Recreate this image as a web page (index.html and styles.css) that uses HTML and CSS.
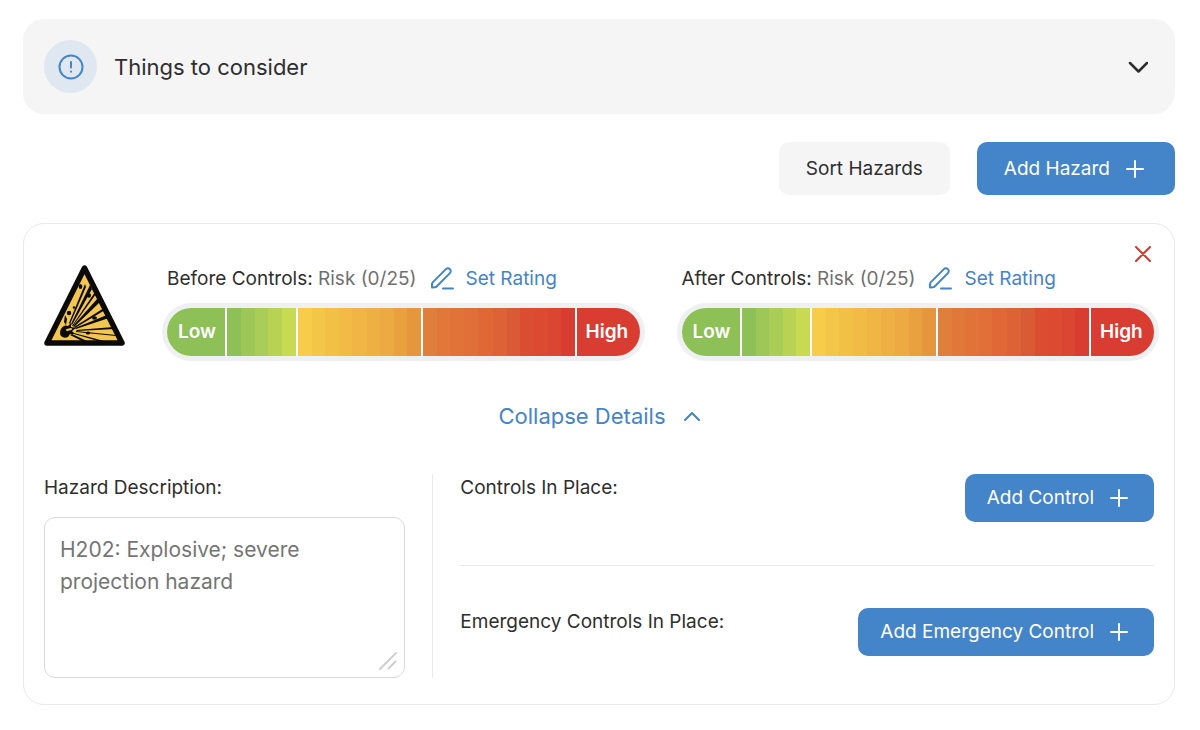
FILE: index.html
```
<!DOCTYPE html>
<html lang="en">
<head>
 <meta charset="utf-8">
 <meta name="viewport" content="width=device-width, initial-scale=1.0">
 <title>Hazards</title>
 <link rel="stylesheet" href="styles.css">
</head>
<body>
<button type="button" class="Consider">
 <span class="ConsiderIcon">
  <svg width="26" height="26" viewBox="0 0 26 26"><circle cx="13" cy="13" r="11.500"/><path d="M13 8v5.500M13 17.400v.3"/></svg>
 </span>
 <span class="ConsiderTitle">Things to consider</span>
 <svg class="ConsiderArrow" width="20" height="12" viewBox="0 0 20 12"><path d="M2 2L10.500 10.500L19 2"/></svg>
</button>

<div class="Toolbar">
 <button type="button" class="Button ButtonLarge ButtonGrey">Sort Hazards</button>
 <button type="button" class="Button ButtonLarge">Add Hazard
  <svg class="Plus" width="18" height="18" viewBox="0 0 18 18"><path d="M9 1v16M1 9h16"/></svg>
 </button>
</div>

<div class="Card">
 <div class="CardTop">
  <button type="button" class="Close" aria-label="Remove hazard">
   <svg width="16" height="16" viewBox="0 0 16 16"><path d="M1 1l14 14M15 1L1 15"/></svg>
  </button>
 </div>

 <div class="Ratings">
  <svg class="HazardSign" viewBox="0 0 81 81" role="img" aria-label="Explosive">
   <path d="M40.500 3L78 78H3z" fill="#f3c64f" stroke="#0b0a08" stroke-width="5.500" stroke-linejoin="round"/>
   <g fill="#0b0a08">
    <path d="M25 58L41 19L42 22L26 59z"/>
    <path d="M27 59L46 20L48 24L28 60z"/>
    <path d="M28 61L51 27L52 29L29 61z"/>
    <path d="M29 61L54 33L56 37L30 62z"/>
    <path d="M30 62L60 43L61 45L31 63z"/>
    <path d="M31 63L63 50L65 53L32 64z"/>
    <path d="M32 65L70 62L71 64L33 66z"/>
    <path d="M32 66L72 70L72 71L32 67z"/>
    <path d="M30 68L60 76H54L30 69z"/>
    <path d="M28 69L43 76H38L26 70z"/>
    <path d="M17 64q3-5 7-3l3-3l0 4l5 1l-4 3l3 3l-5 0l-2 3q-4 2-7-1q-2-3 0-7z"/>
    <path d="M20 57l1-7l2 4l-1 6z"/>
    <ellipse cx="36.500" cy="21.500" rx="1.800" ry="2.500"/>
    <ellipse cx="45" cy="30.500" rx="2" ry="2.200"/>
    <circle cx="25" cy="48" r="2.200"/>
    <circle cx="30" cy="42.500" r="1.200"/>
    <circle cx="34" cy="47" r="1"/>
    <ellipse cx="50.500" cy="53" rx="2.500" ry="1.800"/>
    <ellipse cx="44" cy="68" rx="2.200" ry="1.600"/>
   </g>
   <path d="M23 65l4-1" stroke="#f3c64f"/>
  </svg>

  <div class="Rating">
   <div class="RatingTitle">
    <span>Before Controls: <span class="Risk">Risk (0/25)</span></span>
    <button type="button" class="LinkButton">
     <svg width="24" height="24" viewBox="0 0 24 24"><path d="M1 20.500v-3.300a3 3 0 0 1 .9-2.100L14.900 2.100a2.800 2.800 0 0 1 4 0a2.800 2.800 0 0 1 0 4L5.900 19.300a3 3 0 0 1-2.100.9zM12 21.500h10"/></svg>
     Set Rating
    </button>
   </div>
   <div class="Meter">
    <span class="MeterLow">Low</span>
    <span class="MeterGreen"></span>
    <span class="MeterYellow"></span>
    <span class="MeterOrange"></span>
    <span class="MeterHigh">High</span>
   </div>
  </div>

  <div class="Rating">
   <div class="RatingTitle">
    <span>After Controls: <span class="Risk">Risk (0/25)</span></span>
    <button type="button" class="LinkButton">
     <svg width="24" height="24" viewBox="0 0 24 24"><path d="M1 20.500v-3.300a3 3 0 0 1 .9-2.100L14.900 2.100a2.800 2.800 0 0 1 4 0a2.800 2.800 0 0 1 0 4L5.900 19.300a3 3 0 0 1-2.100.9zM12 21.500h10"/></svg>
     Set Rating
    </button>
   </div>
   <div class="Meter">
    <span class="MeterLow">Low</span>
    <span class="MeterGreen"></span>
    <span class="MeterYellow"></span>
    <span class="MeterOrange"></span>
    <span class="MeterHigh">High</span>
   </div>
  </div>
 </div>

 <div class="CollapseRow">
  <button type="button" class="LinkButton Collapse">Collapse Details
   <svg width="16" height="10" viewBox="0 0 16 10"><path d="M1 9l7-7l7 7"/></svg>
  </button>
 </div>

 <div class="Details">
  <div class="Description">
   <label for="description">Hazard Description:</label>
   <div class="AreaHolder">
    <textarea id="description" placeholder="H202: Explosive; severe projection hazard"></textarea>
    <svg class="Grip" width="18" height="18" viewBox="0 0 18 18"><path d="M1 17L17 1M9.500 16.500L16.500 9.500"/></svg>
   </div>
  </div>
  <div class="Controls">
   <div class="ControlRow">
    <span>Controls In Place:</span>
    <button type="button" class="Button">Add Control
     <svg class="Plus" width="18" height="18" viewBox="0 0 18 18"><path d="M9 1v16M1 9h16"/></svg>
    </button>
   </div>
   <hr>
   <div class="ControlRow">
    <span>Emergency Controls In Place:</span>
    <button type="button" class="Button">Add Emergency Control
     <svg class="Plus" width="18" height="18" viewBox="0 0 18 18"><path d="M9 1v16M1 9h16"/></svg>
    </button>
   </div>
  </div>
 </div>
</div>
</body>
</html>
```
FILE: styles.css
```
* {
 box-sizing:border-box;
}
body {
 margin:0;
 padding:19px 25px 26px 23px;
 background:#FFFFFF;
 color:#2E2E2E;
}
body, button, textarea {
 font-family:Inter, Arial, sans-serif;
 font-size:19px;
 line-height:28px;
}
button {
 border:none;
 background:none;
 padding:0;
 color:inherit;
 cursor:pointer;
}
svg {
 display:block;
 flex:none;
 fill:none;
 stroke:currentColor;
 stroke-width:2;
 stroke-linecap:round;
 stroke-linejoin:round;
}

.Consider {
 display:flex;
 align-items:center;
 width:100%;
 padding:21px 27px 21px 21px;
 border-radius:21px;
 background:#F5F5F5;
 text-align:left;
}
.ConsiderIcon {
 display:flex;
 align-items:center;
 justify-content:center;
 width:53px;
 height:53px;
 margin-right:17px;
 border-radius:50%;
 background:#DFE8F1;
 color:#4484C8;
}
.ConsiderTitle {
 flex:1;
 font-size:22px;
}
.ConsiderArrow {
 stroke-width:2.500;
}

.Toolbar {
 display:flex;
 justify-content:flex-end;
 gap:27px;
 margin:28px 0;
}
.Button {
 display:flex;
 align-items:center;
 gap:16px;
 padding:10px 26px 10px 22px;
 border-radius:10px;
 background:#4484C8;
 color:#FFFFFF;
 white-space:nowrap;
}
.ButtonLarge {
 padding:13px 31px 12px 27px;
}
.ButtonGrey {
 padding:13px 27px 12px;
 background:#F5F5F5;
 color:#2E2E2E;
}

.Card {
 padding:20px 20px 26px;
 border:1px solid #E8EAEB;
 border-radius:21px;
}
.CardTop {
 display:flex;
 justify-content:flex-end;
 height:21px;
}
.Close {
 height:20px;
 padding:2px 3px;
 color:#CF3A2E;
}

/* Ratings */
.Ratings {
 display:grid;
 grid-template-columns:81px 1fr 1fr;
 gap:42px;
 align-items:start;
}
.HazardSign {
 width:81px;
 height:81px;
 stroke:none;
}
.RatingTitle {
 display:flex;
 align-items:center;
 gap:14px;
 margin-bottom:15px;
 white-space:nowrap;
}
.Risk {
 color:#707070;
}
.LinkButton {
 display:flex;
 align-items:center;
 gap:11px;
 color:#4484C8;
}
.Meter {
 display:flex;
 gap:2px;
 height:48px;
 border-radius:24px;
 box-shadow:0 0 0 5px #EFF0F1;
 background:#FFFFFF;
 color:#FFFFFF;
 font-weight:600;
 line-height:48px;
 overflow:hidden;
}
.MeterLow {
 width:58px;
 padding-left:11px;
 background:#8DC057;
}
.MeterHigh {
 width:63px;
 padding-left:9px;
 background:#D93D32;
}
.MeterGreen {
 flex:5;
 background:linear-gradient(to right, #8DC057 20%, #9DC757 20% 40%, #A9CD57 40% 60%, #BAD253 60% 80%, #C8D952 80%);
}
.MeterYellow {
 flex:9;
 background:linear-gradient(to right, #F6CC48 11%, #F4C647 11% 22%, #F3C046 22% 33%, #F1BB45 33% 44%, #F0B544 44% 56%, #EEB043 56% 67%, #EDAA42 67% 78%, #E9A03F 78% 89%, #E6963D 89%);
}
.MeterOrange {
 flex:11;
 background:linear-gradient(to right, #E07F3C 9%, #E1783A 9% 18%, #E17238 18% 27%, #E16F38 27% 36%, #DF6836 36% 46%, #DD6236 46% 55%, #D95B35 55% 64%, #DB4D30 64% 73%, #DB4A31 73% 82%, #DA4631 82% 91%, #D93D32 91%);
}

.CollapseRow {
 display:flex;
 justify-content:center;
 margin:46px 0 44px;
}
.Collapse {
 gap:18px;
 font-size:22px;
}

/* Details */
.Details {
 display:grid;
 grid-template-columns:minmax(240px, 389fr) 720fr;
}
.Description {
 padding-right:27px;
 border-right:1px solid #E8EAEB;
}
.Description label {
 display:block;
 margin-bottom:15px;
}
.AreaHolder {
 position:relative;
}
.AreaHolder textarea {
 display:block;
 width:100%;
 height:161px;
 padding:16px 15px;
 border:1px solid #D9DBDC;
 border-radius:11px;
 background:none;
 font-size:21px;
 line-height:32px;
 resize:none;
}
.AreaHolder textarea::placeholder {
 color:#757575;
}
.Grip {
 position:absolute;
 right:8px;
 bottom:8px;
 color:#CDCFCF;
}
.Controls {
 padding-left:27px;
}
.ControlRow {
 display:flex;
 justify-content:space-between;
 align-items:flex-start;
}
.Controls hr {
 margin:43px 0 42px;
 border:none;
 border-top:1px solid #E8EAEB;
}
```
